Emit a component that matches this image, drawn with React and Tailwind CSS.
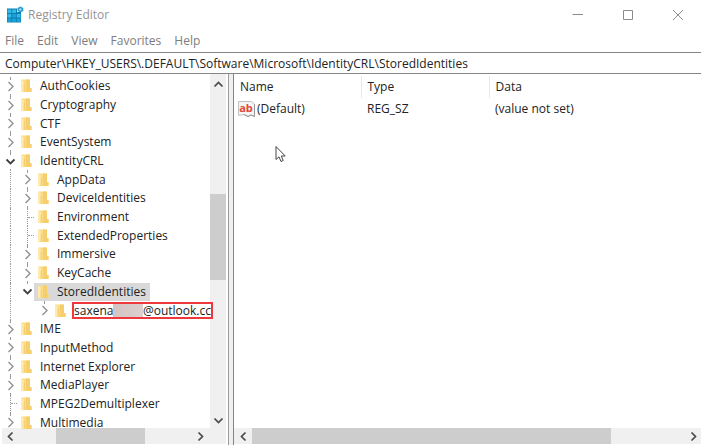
import React from "react";

const items = [
  { name: "AuthCookies", level: 0, state: "closed" },
  { name: "Cryptography", level: 0, state: "closed" },
  { name: "CTF", level: 0, state: "closed" },
  { name: "EventSystem", level: 0, state: "closed" },
  { name: "IdentityCRL", level: 0, state: "open" },
  { name: "AppData", level: 1, state: "closed" },
  { name: "DeviceIdentities", level: 1, state: "closed" },
  { name: "Environment", level: 1, state: "leaf" },
  { name: "ExtendedProperties", level: 1, state: "leaf" },
  { name: "Immersive", level: 1, state: "closed" },
  { name: "KeyCache", level: 1, state: "closed" },
  { name: "StoredIdentities", level: 1, state: "open", selected: true, last: true },
  { name: "saxena", domain: "@outlook.cc", level: 2, state: "closed", last: true },
  { name: "IME", level: 0, state: "closed" },
  { name: "InputMethod", level: 0, state: "closed" },
  { name: "Internet Explorer", level: 0, state: "closed" },
  { name: "MediaPlayer", level: 0, state: "closed" },
  { name: "MPEG2Demultiplexer", level: 0, state: "leaf" },
  { name: "Multimedia", level: 0, state: "closed", last: true },
];

const arrowPaths = {
  up: "M1.5 7.5 L5.5 3.5 L9.5 7.5",
  down: "M1.5 3.5 L5.5 7.5 L9.5 3.5",
  left: "M7.5 1.5 L3.5 5.5 L7.5 9.5",
  right: "M3.5 1.5 L7.5 5.5 L3.5 9.5",
};

function Arrow({ dir, className }) {
  return (
    <svg width="11" height="11" viewBox="0 0 11 11" fill="none" stroke="currentColor" className={className} aria-hidden="true">
      <path d={arrowPaths[dir]} />
    </svg>
  );
}

function ScrollButton({ dir, label }) {
  return (
    <button type="button" aria-label={label} className="flex size-4 shrink-0 items-center justify-center text-[#484848]">
      <Arrow dir={dir} className="shrink-0 stroke-[1.7]" />
    </button>
  );
}

function Folder() {
  return (
    <svg width="11" height="14" viewBox="0 0 11 14" className="shrink-0" aria-hidden="true">
      <path d="M0.5 0.5 H8.5 V9 H10.5 V13 H0.5 Z" fill="#fbdc85" />
      <path d="M5 0.5 H9 V9 H10.5 V13 H5 Z" fill="#f6cf6c" />
      <path d="M0 0.8 L3 2.5 V13.8 L0 12.5 Z" fill="#ffe9ad" />
      <path d="M3.2 4.500 V13" stroke="#efc564" strokeWidth="0.8" />
    </svg>
  );
}

function Twisty({ state, label, last }) {
  if (state === "leaf") {
    return (
      <span className="flex w-[15px] shrink-0 self-stretch pl-2">
        <span className="flex w-full items-center border-l border-dotted border-[#9a9a9a]">
          <span className="w-full border-t border-dotted border-[#9a9a9a]" />
        </span>
      </span>
    );
  }
  return (
    <span className="flex w-[15px] shrink-0 flex-col items-center self-stretch pl-0.5">
      <span className="min-h-0 flex-1 border-l border-dotted border-[#9a9a9a]" />
      <button type="button" aria-label={label} className="flex h-[15px] items-center">
        {state === "open" ? (
          <Arrow dir="down" className="stroke-[1.8] text-[#404040]" />
        ) : (
          <svg width="11" height="13" viewBox="0 0 11 13" fill="none" stroke="#929292" strokeWidth="1.400" aria-hidden="true">
            <path d="M3.500 2 L8 6.500 L3.500 11" />
          </svg>
        )}
      </button>
      <span className={"min-h-0 flex-1 " + (last ? "" : "border-l border-dotted border-[#9a9a9a]")} />
    </span>
  );
}

function TreeRow({ item }) {
  return (
    <li role="treeitem" aria-selected={!!item.selected} className="flex min-h-0 items-center">
      {item.level > 0 && (
        <span className="flex w-[17px] shrink-0 self-stretch pl-2">
          <span className="border-l border-dotted border-[#9a9a9a]" />
        </span>
      )}
      {item.level > 1 && <span className="w-[17px] shrink-0" />}
      <Twisty state={item.state} last={item.last} label={"Toggle " + item.name} />
      <span className={"flex shrink-0 items-center self-stretch pl-1 " + (item.selected ? "bg-[#d9d9d9] pr-1" : "")}>
        <Folder />
        {item.domain ? (
          <span className="ml-1.5 flex h-[17px] w-[141px] items-center border-2 border-[#f0383c] bg-white leading-3">
            <span>{item.name}</span>
            <span className="h-full min-w-0 flex-1 bg-linear-to-r from-[#d5c3c3] to-[#dccfcf]" />
            <span>{item.domain}</span>
          </span>
        ) : (
          <span className="pl-2 leading-3 whitespace-nowrap">{item.name}</span>
        )}
      </span>
    </li>
  );
}

function AppIcon() {
  return (
    <svg width="18" height="18" viewBox="0 0 18 18" aria-hidden="true">
      <path d="M1 2.500 H11 V6 H15 V16.500 H1 Z" fill="#0b7fb5" />
      <path d="M1.500 3.500 h3.800 v3.500 h-3.800z M6.200 3.500 h3.800 v3.500 h-3.800z M1.500 8 h3.800 v3.500 h-3.800z M10.800 8 h3.700 v3.500 h-3.700z" fill="#35b8e4" />
      <path d="M6.200 8 h3.800 v3.500 h-3.800z M1.500 12.500 h3.800 v3.500 h-3.800z M6.200 12.500 h3.800 v3.500 h-3.800z M10.800 12.500 h3.700 v3.500 h-3.700z" fill="#1ba0d4" />
      <path d="M14.300 0.500 L17.300 2 V5 L14.300 6.500 L11.500 5 V2 Z" fill="#2a9cc9" />
      <path d="M14.300 2 L15.800 3.500 L14.300 5 L12.900 3.500 Z" fill="#a7e1f5" />
    </svg>
  );
}

function StringIcon() {
  return (
    <svg width="18" height="18" viewBox="0 0 18 18" className="shrink-0" aria-hidden="true">
      <path d="M0.500 1.500 H13.500 L16.500 4 V16.500 L13 15 L10 16.500 L6 14.500 L0.500 15.500 Z" fill="#f5f5f5" stroke="#c0c0c0" />
      <path d="M16.500 4 V16.500 L13 15 L10 16.500 L6 14.500" fill="none" stroke="#959595" />
      <text x="8" y="12" textAnchor="middle" fontSize="11" fontWeight="700" fill="#e04a35" fontFamily="Open Sans, sans-serif">ab</text>
    </svg>
  );
}

export default function App() {
  return (
    <div className="relative flex h-screen flex-col overflow-hidden bg-white font-['Open_Sans','Noto_Sans',sans-serif] text-[12px] text-[#222]">
      <header className="flex h-[30px] shrink-0 items-center pl-1.5 text-[#949494]">
        <AppIcon />
        <h1 className="flex-1 pl-1">Registry Editor</h1>
        <div className="flex gap-[38px] pr-[17px] text-[#8c8c8c]">
          <button type="button" aria-label="Minimize">
            <svg width="12" height="12" viewBox="0 0 12 12" stroke="currentColor"><path d="M0.500 5.500 H11" /></svg>
          </button>
          <button type="button" aria-label="Maximize">
            <svg width="12" height="12" viewBox="0 0 12 12" fill="none" stroke="currentColor"><path d="M1.500 1.500 H10.500 V10.500 H1.500 Z" /></svg>
          </button>
          <button type="button" aria-label="Close">
            <svg width="12" height="12" viewBox="0 0 12 12" stroke="currentColor"><path d="M1 1 L11 11 M11 1 L1 11" /></svg>
          </button>
        </div>
      </header>

      <nav className="flex h-[22px] shrink-0 items-center gap-[13px] pl-[5px] text-[#7d7d7d]">
        <button type="button">File</button>
        <button type="button">Edit</button>
        <button type="button">View</button>
        <button type="button">Favorites</button>
        <button type="button">Help</button>
      </nav>

      <input
        aria-label="Address"
        readOnly
        defaultValue="Computer\HKEY_USERS\.DEFAULT\Software\Microsoft\IdentityCRL\StoredIdentities"
        className="h-[22px] w-full shrink-0 border-y border-[#858585] px-[5px] outline-none"
      />

      <main className="flex min-h-0 flex-1">
        <section className="flex w-[229px] shrink-0 flex-col border-r border-[#9c9c9c] pr-0.5 pb-px pl-0.5">
          <div className="flex min-h-0 flex-1">
            <div className="z-10 min-w-0 flex-1 pt-[3px]">
              <ul role="tree" aria-label="Registry keys" className="grid h-[355px] auto-rows-fr">
                {items.map((item) => (
                  <TreeRow key={item.name} item={item} />
                ))}
              </ul>
            </div>
            <div className="flex w-4 flex-col bg-[#f0f0f0] pt-0.5">
              <ScrollButton dir="up" label="Scroll up" />
              <div className="flex flex-1 flex-col pt-[102px]">
                <div className="h-[86px] bg-[#cdcdcd]" />
              </div>
              <ScrollButton dir="down" label="Scroll down" />
            </div>
          </div>
          <div className="flex h-4 shrink-0 bg-[#f0f0f0] pr-[18px]">
            <ScrollButton dir="left" label="Scroll left" />
            <div className="flex-1 pl-[38px]">
              <div className="h-4 w-[89px] bg-[#cdcdcd]" />
            </div>
            <ScrollButton dir="right" label="Scroll right" />
          </div>
        </section>
        <div className="w-1 shrink-0 bg-[#f0f0f0]" />
        <section className="flex min-w-0 flex-1 flex-col border-l border-[#858585] pb-px">
          <div className="min-h-0 flex-1 pt-0.5">
            <table className="w-full table-fixed text-left">
              <colgroup>
                <col className="w-[127px]" />
                <col className="w-[128px]" />
                <col />
              </colgroup>
              <thead>
                <tr className="h-[22px]">
                  <th className="border-r border-[#e8e8e8] pl-1.5 font-normal">Name</th>
                  <th className="border-r border-[#e8e8e8] pl-1.5 font-normal">Type</th>
                  <th className="pl-1.5 font-normal">Data</th>
                </tr>
              </thead>
              <tbody>
                <tr className="h-[21px]">
                  <td className="pl-1">
                    <span className="flex items-center gap-px">
                      <StringIcon />
                      (Default)
                    </span>
                  </td>
                  <td className="pl-1.5">REG_SZ</td>
                  <td className="pl-1.5">(value not set)</td>
                </tr>
              </tbody>
            </table>
          </div>
          <div className="flex h-4 shrink-0 bg-[#f0f0f0] pl-px">
            <ScrollButton dir="left" label="Scroll list left" />
            <div className="flex-1 pl-px">
              <div className="h-4 w-[83%] bg-[#cdcdcd]" />
            </div>
            <ScrollButton dir="right" label="Scroll list right" />
          </div>
        </section>
      </main>

      <svg width="12" height="18" viewBox="0 0 12 18" className="pointer-events-none absolute top-[145px] left-[275px]" aria-hidden="true">
        <path d="M1 1.500 V14.500 L4 11.800 L6 16.500 L8.200 15.500 L6.300 11 H10.200 Z" fill="#fff" stroke="#444" strokeWidth="1" />
      </svg>
    </div>
  );
}
